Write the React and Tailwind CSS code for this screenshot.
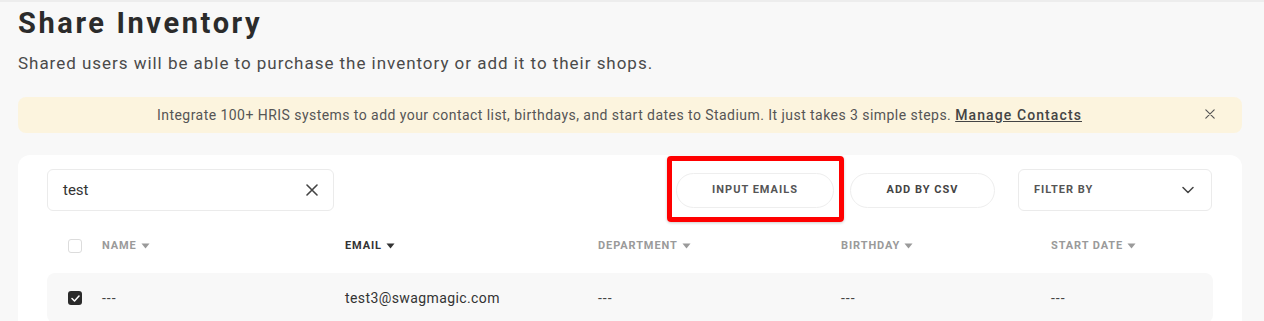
import React from "react";

const Caret = () => (
  <svg width="9" height="6" viewBox="0 0 9 6" className="ml-[4px] inline-block">
    <path d="M0.5 0.5 H8.5 L4.5 5.5 Z" fill="currentColor" />
  </svg>
);

const XIcon = ({ size = 12, stroke = 1.6, color = "#333" }) => (
  <svg width={size} height={size} viewBox="0 0 12 12">
    <path d="M1 1 L11 11 M11 1 L1 11" stroke={color} strokeWidth={stroke} strokeLinecap="round" />
  </svg>
);

export default function App() {
  const font = { fontFamily: "Roboto, 'Noto Sans', sans-serif" };
  return (
    <div className="w-[1264px] h-[321px] overflow-hidden bg-[#f8f8f8] border-t-2 border-[#ededed]" style={font}>
      <div className="pl-[18px] pr-[22px]">
        <h1 className="text-[29px] leading-[34px] font-bold text-[#2b2b2b] pt-[4px] tracking-[2.6px]">Share Inventory</h1>
        <p className="mt-[12px] text-[17px] leading-[22px] text-[#4a4a4a] tracking-[0.97px]">
          Shared users will be able to purchase the inventory or add it to their shops.
        </p>
        <div className="mt-[23px] h-[36px] rounded-[8px] bg-[#fcf4de] flex items-center relative">
          <div className="flex-1 text-center text-[14px] text-[#555] tracking-[0.45px] pr-[21px]">
            Integrate 100+ HRIS systems to add your contact list, birthdays, and start dates to Stadium. It just takes 3 simple steps.{" "}
            <span className="underline font-medium text-[#444] tracking-[1.1px]">Manage Contacts</span>
          </div>
          <div className="absolute right-[27px] top-[12px]">
            <XIcon size={10} stroke={1.4} color="#555" />
          </div>
        </div>
        <div className="mt-[22px] bg-white rounded-t-[12px] pt-[14px] pl-[29px] pr-[29px] h-[200px]">
          <div className="flex items-center">
            <div className="w-[287px] h-[42px] border border-[#ebebeb] rounded-[6px] flex items-center pl-[15px] pr-[15px]">
              <span className="flex-1 text-[15px] text-[#333]">test</span>
              <XIcon size={12} stroke={1.6} color="#444" />
            </div>
            <div className="ml-[342px] relative">
              <div className="absolute left-[-9px] top-[-17px] w-[177px] h-[66px] border-[5px] border-[#ff0000] rounded-[4px] pointer-events-none shadow-[0_1px_3px_rgba(0,0,0,0.2)]" />
              <button className="w-[158px] h-[35px] rounded-full border border-[#eeeeee] bg-white text-[11px] font-bold tracking-[1px] text-[#555]">
                INPUT EMAILS
              </button>
            </div>
            <button className="ml-[16px] w-[145px] h-[35px] rounded-full border border-[#eeeeee] bg-white text-[11px] font-bold tracking-[1px] text-[#444]">
              ADD BY CSV
            </button>
            <div className="ml-[23px] w-[194px] h-[42px] border border-[#ebebeb] rounded-[6px] flex items-center pl-[15px] pr-[17px]">
              <span className="flex-1 text-[11px] font-bold tracking-[1px] text-[#555]">FILTER BY</span>
              <svg width="12" height="8" viewBox="0 0 12 8">
                <path d="M1 1.5 L6 6.5 L11 1.5" stroke="#444" strokeWidth="1.5" fill="none" strokeLinecap="round" strokeLinejoin="round" />
              </svg>
            </div>
          </div>
          <div className="mt-[28px] flex items-center h-[14px] pl-[21px] text-[11px] font-bold tracking-[0.9px] text-[#9a9a9a]">
            <div className="w-[14px] h-[14px] rounded-[3px] border border-[#dcdcdc] bg-white" />
            <div className="ml-[20px] w-[243px] flex items-center">NAME<Caret /></div>
            <div className="w-[253px] flex items-center text-[#333]">EMAIL<Caret /></div>
            <div className="w-[243px] flex items-center">DEPARTMENT<Caret /></div>
            <div className="w-[210px] flex items-center">BIRTHDAY<Caret /></div>
            <div className="flex items-center">START DATE<Caret /></div>
          </div>
          <div className="mt-[20px] h-[50px] rounded-[8px] bg-[#f8f8f8] flex items-center pl-[21px] text-[14px] text-[#444]">
            <div className="w-[14px] h-[14px] rounded-[3px] bg-[#2b2b2b] flex items-center justify-center">
              <svg width="9" height="7" viewBox="0 0 9 7">
                <path d="M1 3.5 L3.5 6 L8 1" stroke="#fff" strokeWidth="1.5" fill="none" strokeLinecap="round" strokeLinejoin="round" />
              </svg>
            </div>
            <div className="ml-[20px] w-[243px] tracking-[1px]">---</div>
            <div className="w-[253px] text-[14px] text-[#333] tracking-[0.4px]">test3@swagmagic.com</div>
            <div className="w-[243px] tracking-[1px]">---</div>
            <div className="w-[210px] tracking-[1px]">---</div>
            <div className="tracking-[1px]">---</div>
          </div>
        </div>
      </div>
    </div>
  );
}
